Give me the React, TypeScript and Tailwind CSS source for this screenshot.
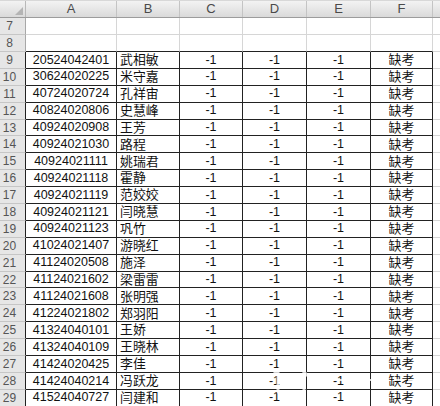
import React from "react";

const rows: [number, string, string][] = [
  [9, "20524042401", "武相敏"],
  [10, "30624020225", "米守嘉"],
  [11, "40724020724", "孔祥宙"],
  [12, "40824020806", "史慧峰"],
  [13, "40924020908", "王芳"],
  [14, "40924021030", "路程"],
  [15, "40924021111", "姚瑞君"],
  [16, "40924021118", "霍静"],
  [17, "40924021119", "范姣姣"],
  [18, "40924021121", "闫晓慧"],
  [19, "40924021123", "巩竹"],
  [20, "41024021407", "游晓红"],
  [21, "41124020508", "施泽"],
  [22, "41124021602", "梁雷雷"],
  [23, "41124021608", "张明强"],
  [24, "41224021802", "郑羽阳"],
  [25, "41324040101", "王娇"],
  [26, "41324040109", "王晓林"],
  [27, "41424020425", "李佳"],
  [28, "41424040214", "冯跃龙"],
  [29, "41524040727", "闫建和"],
];

const num = { fontFamily: '"Liberation Sans", Arial, sans-serif' };
const cjk = { fontFamily: '"Noto Sans CJK SC", "Liberation Sans", sans-serif' };

function RowHead({ n, dark }: { n: number; dark?: boolean }) {
  return (
    <div
      className={`w-[26px] shrink-0 h-full bg-[#e6e6e6] border-b border-b-[#c6c6c6] border-r ${
        dark ? "border-r-[#222]" : "border-r-[#a8a8a8]"
      } flex items-center justify-center pr-[6px] text-[12px] text-[#555]`}
      style={num}
    >
      {n}
    </div>
  );
}

export default function App() {
  const colHeads: [string, string][] = [
    ["A", "w-[91px]"],
    ["B", "w-[63px]"],
    ["C", "w-[63px]"],
    ["D", "w-[64px]"],
    ["E", "w-[64px]"],
    ["F", "w-[62px]"],
  ];
  return (
    <div className="relative w-[440px] h-[406px] overflow-hidden bg-white">
      <div className="h-[1px] bg-[#d8d8d8]" />
      {/* column header */}
      <div className="flex h-[17px] border-b border-[#9c9c9c] bg-gradient-to-b from-[#f3f3f3] to-[#dadada]">
        <div className="relative w-[26px] shrink-0 h-full border-r border-[#b8b8b8]">
          <div className="absolute right-[2px] bottom-[2px] w-0 h-0 border-l-[8px] border-l-transparent border-b-[8px] border-b-[#b4b4b4]" />
        </div>
        {colHeads.map(([l, w]) => (
          <div
            key={l}
            className={`${w} shrink-0 h-full border-r border-[#c4c4c4] flex items-center justify-center text-[13px] text-[#4a4a4a]`}
            style={num}
          >
            {l}
          </div>
        ))}
        <div className="flex-1" />
      </div>
      {/* rows 7-8 */}
      {[7, 8].map((n) => (
        <div key={n} className="flex h-[17px]">
          <RowHead n={n} />
          {colHeads.map(([l, w]) => (
            <div
              key={l}
              className={`${w} shrink-0 h-full border-r border-r-[#d6d6d6] border-b ${
                n === 8 ? "border-b-[#222]" : "border-b-[#d6d6d6]"
              }`}
            />
          ))}
          <div className="flex-1 h-full border-b border-[#d6d6d6]" />
        </div>
      ))}
      {/* data rows */}
      {rows.map(([n, id, name]) => (
        <div key={n} className="flex h-[16.9px] text-[#111]">
          <RowHead n={n} dark />
          <div
            className="w-[91px] shrink-0 h-full border-r border-b border-[#222] flex items-center justify-center text-[12.5px]"
            style={num}
          >
            {id}
          </div>
          <div
            className="w-[63px] shrink-0 h-full border-r border-b border-[#222] flex items-center pl-[3px] text-[11.5px] leading-none"
            style={cjk}
          >
            <span className="inline-block scale-x-[1.12] scale-y-[1.1] origin-left">{name}</span>
          </div>
          {["w-[63px]", "w-[64px]", "w-[64px]"].map((w, i) => (
            <div
              key={i}
              className={`${w} shrink-0 h-full border-r border-b border-[#222] flex items-center justify-center text-[12.5px]`}
              style={num}
            >
              -1
            </div>
          ))}
          <div
            className="w-[62px] shrink-0 h-full border-r border-b border-[#222] flex items-center justify-center text-[11.5px] leading-none"
            style={cjk}
          >
            <span className="inline-block scale-x-[1.12] scale-y-[1.1]">缺考</span>
          </div>
          <div className="flex-1 h-full border-b border-[#d6d6d6]" />
        </div>
      ))}
      {/* watermark logo */}
      <svg
        className="absolute left-[266px] top-[350px] pointer-events-none opacity-80"
        width="170"
        height="48"
        viewBox="0 0 170 48"
        fill="none"
      >
        <path
          d="M4 28 L24 8 L44 28 M12 22 L12 42 L38 42 L38 22"
          stroke="white"
          strokeWidth="3"
          strokeLinecap="round"
          strokeLinejoin="round"
        />
        <path
          d="M30 30 L168 30"
          stroke="white"
          strokeWidth="2"
          strokeDasharray="8 6"
        />
      </svg>
    </div>
  );
}
